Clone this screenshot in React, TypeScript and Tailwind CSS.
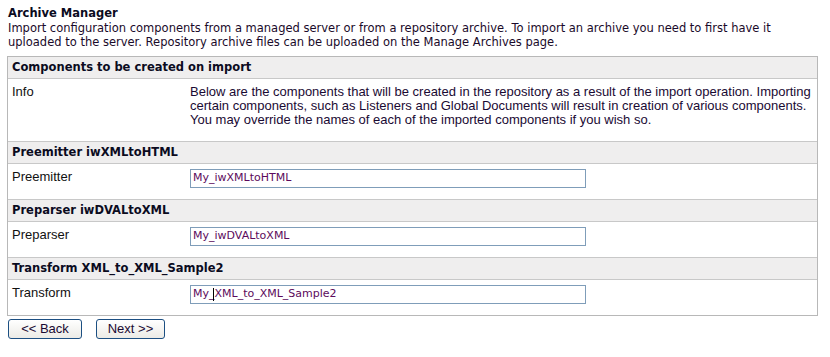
const sections = [
  { title: "Preemitter iwXMLtoHTML", label: "Preemitter", value: "My_iwXMLtoHTML", caret: false },
  { title: "Preparser iwDVALtoXML", label: "Preparser", value: "My_iwDVALtoXML", caret: false },
  { title: "Transform XML_to_XML_Sample2", label: "Transform", value: "My_XML_to_XML_Sample2", caret: true },
];

const verdana = "font-['DejaVu_Sans',Verdana,sans-serif]";
const arial = "font-['Liberation_Sans',Arial,sans-serif]";

function Header({ children, divided }: { children: React.ReactNode; divided?: boolean }) {
  return (
    <div
      className={`flex items-center pl-[4px] bg-[#efeeee] ${divided ? "h-[22px] border-t border-[#c8c8c8]" : "h-[21px]"} ${verdana} text-[11.5px] font-bold text-[#0b0b1e]`}
    >
      {children}
    </div>
  );
}

function FakeInput({ value, caret }: { value: string; caret: boolean }) {
  return (
    <div
      className={`w-[396px] h-[19px] border border-[#7f9db9] bg-white pl-[2px] flex items-center ${verdana} text-[11px] text-[#5c0a5c] whitespace-pre`}
    >
      {caret ? (
        <>
          {value.slice(0, 3)}
          <span className="inline-block w-px h-[13px] bg-black -ml-[2px] mr-px" />
          {value.slice(3)}
        </>
      ) : (
        value
      )}
    </div>
  );
}

export default function App() {
  return (
    <div className="w-[830px] h-[357px] bg-white px-[7px] pt-[5px]">
      <h1 className={`${verdana} text-[11.5px] font-bold text-[#0b0b1e] leading-[16px] pl-px`}>
        Archive Manager
      </h1>
      <p className={`${verdana} text-[11.5px] leading-[14px] text-[#1a0a2a] pl-px whitespace-nowrap`}>
        Import configuration components from a managed server or from a repository archive. To import an
        archive you need to first have it
        <br />
        uploaded to the server. Repository archive files can be uploaded on the Manage Archives page.
      </p>

      <div className="mt-[7px] w-[811px] border border-[#b8b8b8]">
        <Header>Components to be created on import</Header>
        <div className={`grid grid-cols-[178px_1fr] border-t border-[#c8c8c8] h-[63px] pt-[6px] ${arial} text-[13px] leading-[14px] text-[#1a0a33]`}>
          <div className="pl-[4px] text-[#111]">Info</div>
          <div className="pl-[4px]">
            Below are the components that will be created in the repository as a result of the import
            operation. Importing certain components, such as Listeners and Global Documents will result in
            creation of various components. You may override the names of each of the imported components
            if you wish so.
          </div>
        </div>

        {sections.map((s) => (
          <div key={s.title}>
            <Header divided>{s.title}</Header>
            <div className="grid grid-cols-[178px_1fr] items-start border-t border-[#c8c8c8] h-[36px] pt-[5px]">
              <div className={`pl-[4px] ${arial} text-[13px] leading-[15px] text-[#111]`}>{s.label}</div>
              <div className="pl-[4px]">
                <FakeInput value={s.value} caret={s.caret} />
              </div>
            </div>
          </div>
        ))}
      </div>

      <div className="flex gap-[14px] mt-[3px] pl-px">
        <button
          className={`w-[74px] h-[20px] rounded-[3px] border border-[#1c4f82] bg-gradient-to-b from-white to-[#ecebe6] ${arial} text-[13px] leading-[18px] text-[#1a0a33]`}
        >
          {"<< Back"}
        </button>
        <button
          className={`w-[69px] h-[20px] rounded-[3px] border border-[#1c4f82] bg-gradient-to-b from-white to-[#ecebe6] ${arial} text-[13px] leading-[18px] text-[#1a0a33]`}
        >
          {"Next >>"}
        </button>
      </div>
    </div>
  );
}
